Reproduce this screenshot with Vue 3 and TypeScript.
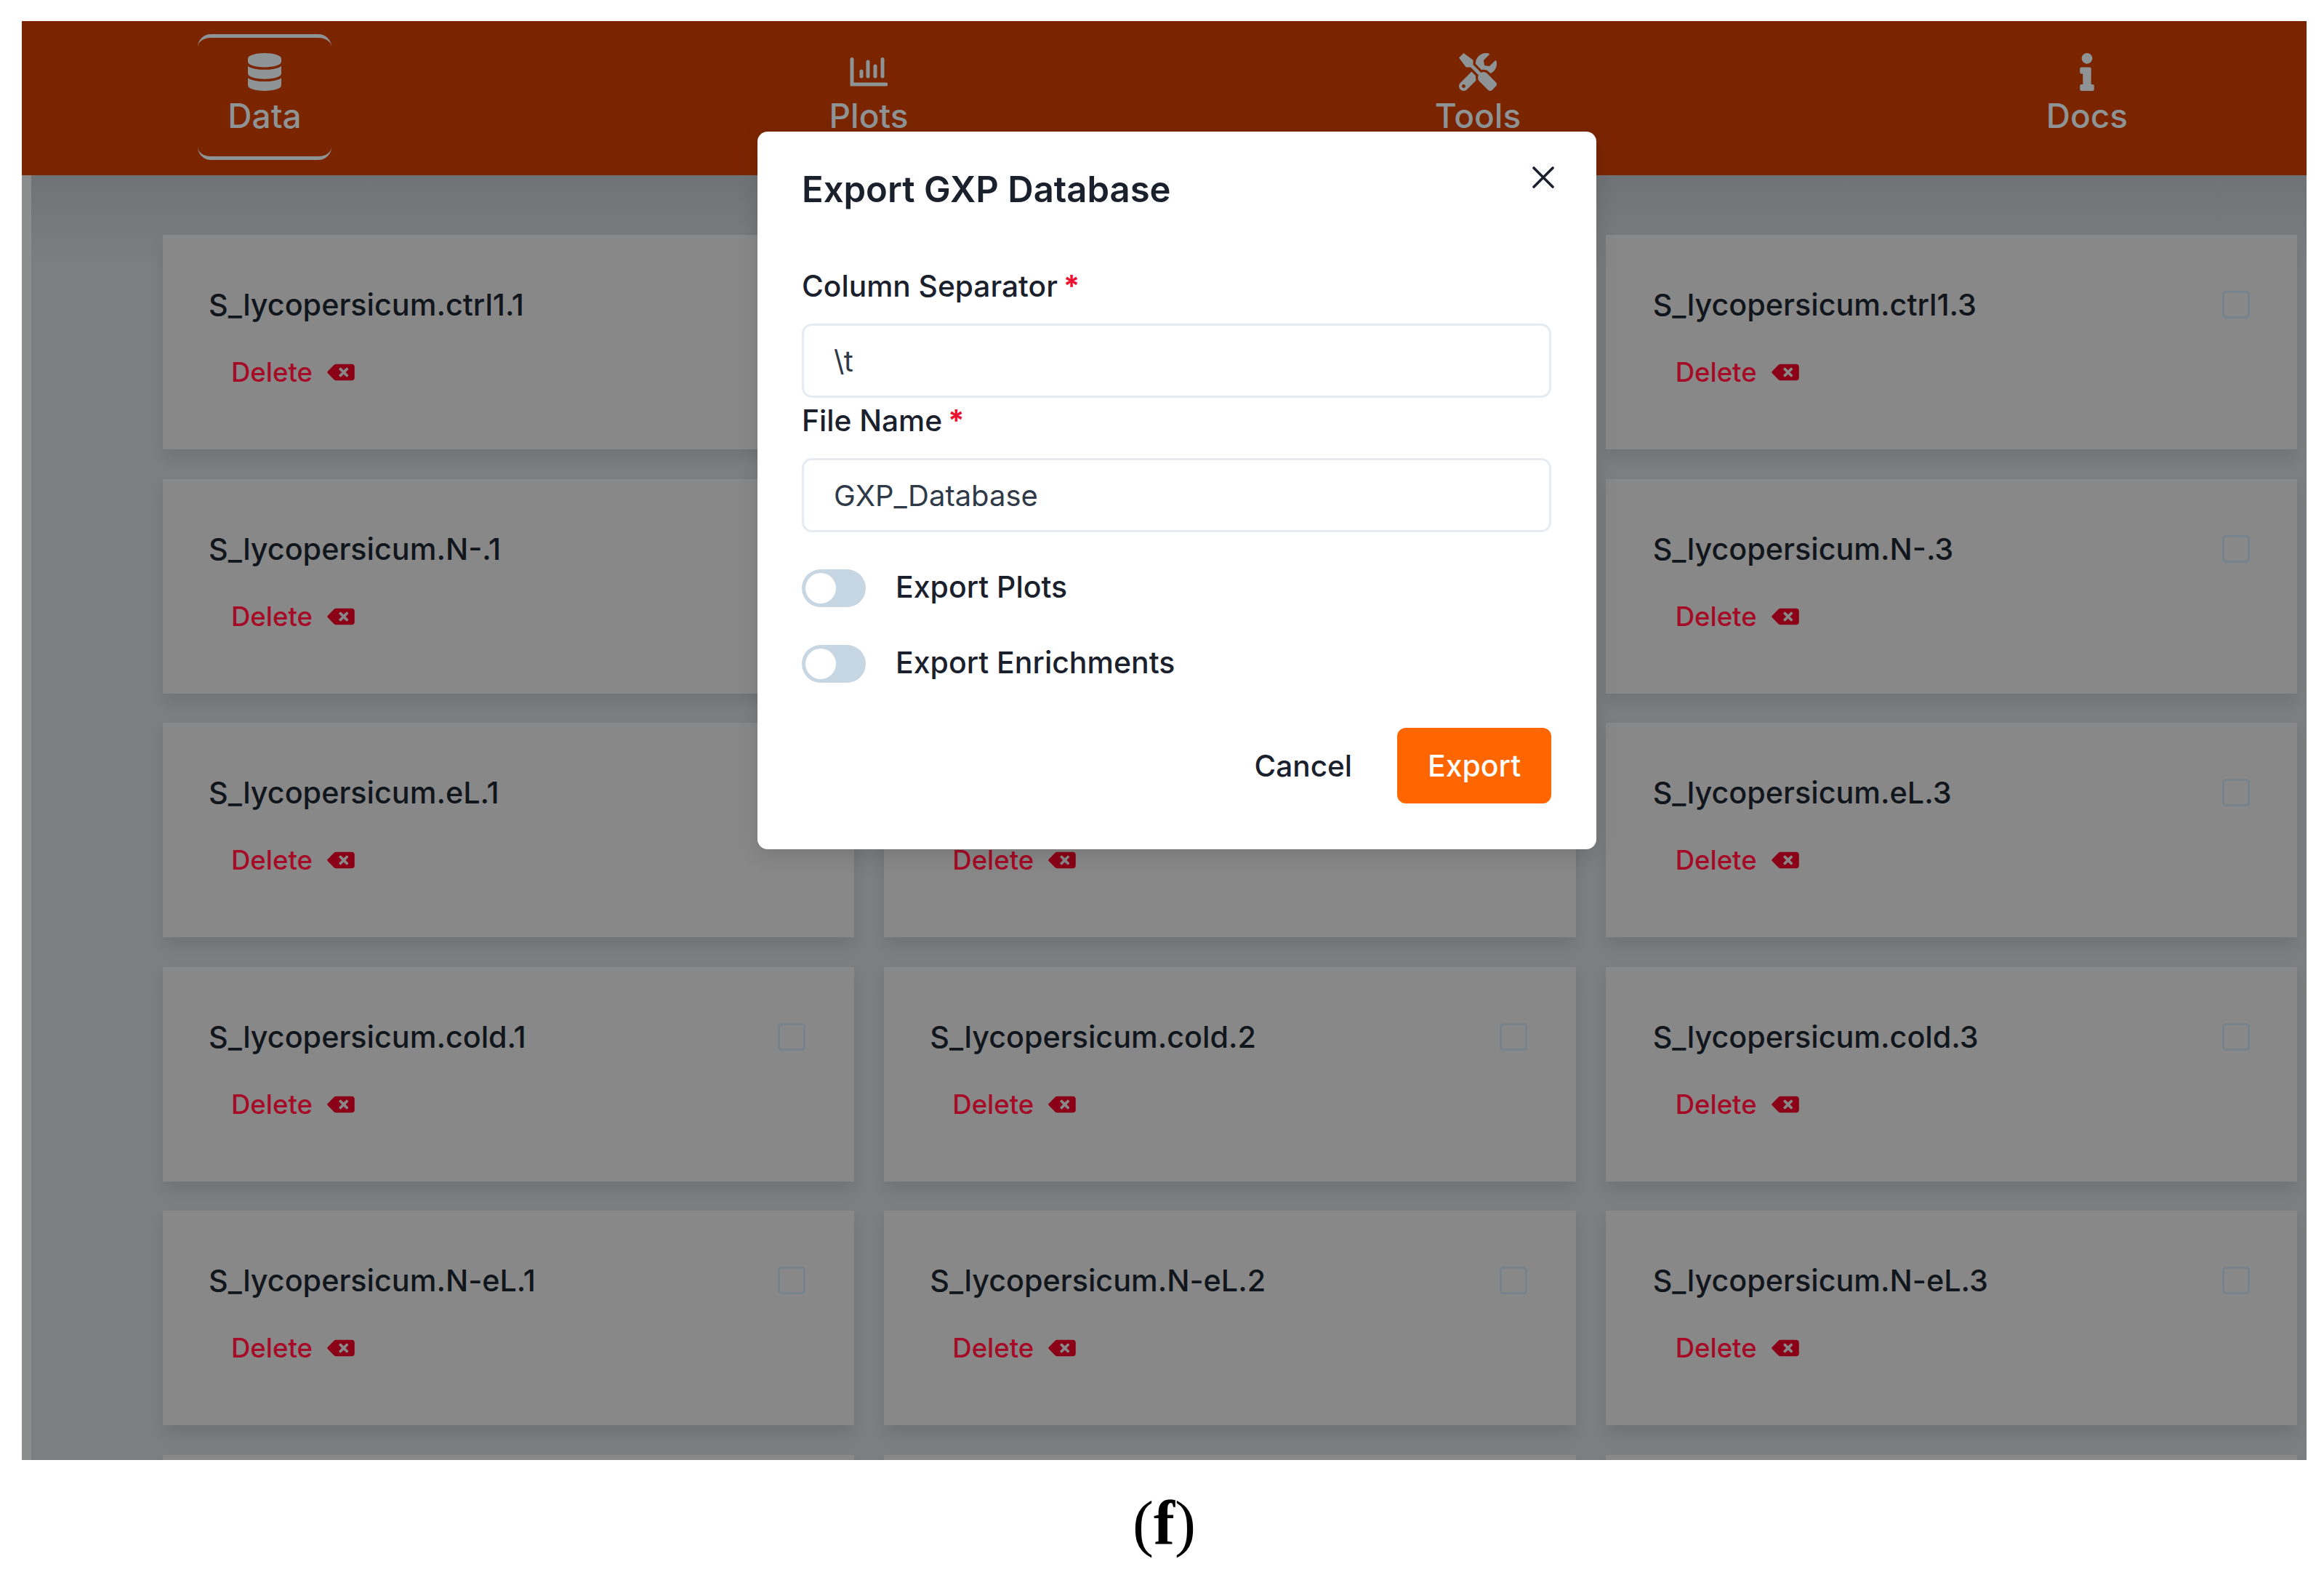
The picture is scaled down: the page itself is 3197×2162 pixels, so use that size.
<script setup lang="ts">
const navItems = [
  { key: "data", label: "Data", active: true },
  { key: "plots", label: "Plots", active: false },
  { key: "tools", label: "Tools", active: false },
  { key: "docs", label: "Docs", active: false },
];

const samples = ["ctrl1", "N-", "eL", "cold", "N-eL"];
const cards: string[] = [];
for (const s of samples) {
  for (const n of [1, 2, 3]) cards.push(`S_lycopersicum.${s}.${n}`);
}
// the sixth row is only just cut off at the bottom of the window
cards.push("", "", "");

const switches = ["Export Plots", "Export Enrichments"];
</script>

<template>
  <div class="page">
    <div class="shot">
      <header class="nav">
        <div v-for="item in navItems" :key="item.key" class="nav-item" :class="{ active: item.active }">
          <div class="nav-icon">
            <svg v-if="item.key === 'data'" width="46" height="52" viewBox="0 0 448 512" fill="currentColor" preserveAspectRatio="none">
              <path d="M448 73.143v45.714C448 159.143 347.667 192 224 192S0 159.143 0 118.857V73.143C0 32.857 100.333 0 224 0s224 32.857 224 73.143zM448 176v102.857C448 319.143 347.667 352 224 352S0 319.143 0 278.857V176c48.125 33.143 136.208 48.572 224 48.572S399.874 209.143 448 176zm0 160v102.857C448 479.143 347.667 512 224 512S0 479.143 0 438.857V336c48.125 33.143 136.208 48.572 224 48.572S399.874 369.143 448 336z"/>
            </svg>
            <svg v-else-if="item.key === 'plots'" width="52" height="40" viewBox="0 0 52 40" fill="none" stroke="currentColor" stroke-width="5" stroke-linecap="round">
              <path d="M3 2.5V37H50"/>
              <path d="M16 19v7M25 6v20M35 12v14M45 2.5V26"/>
            </svg>
            <svg v-else-if="item.key === 'tools'" width="52" height="52" viewBox="0 0 512 512" fill="currentColor">
              <path d="M501.1 395.7L384 278.6c-23.1-23.1-57.6-27.6-85.4-13.9L192 158.1V96L64 0 0 64l96 128h62.1l106.6 106.6c-13.6 27.8-9.2 62.3 13.9 85.4l117.1 117.1c14.6 14.6 38.2 14.6 52.7 0l52.7-52.7c14.5-14.6 14.5-38.2 0-52.7zM331.7 225c28.3 0 54.9 11 74.9 31l19.4 19.4c15.8-6.9 30.8-16.5 43.8-29.5 37.1-37.1 49.7-89.3 37.9-136.7-2.2-9-13.5-12.1-20.1-5.5l-74.4 74.4-67.9-11.3L334 98.9l74.4-74.4c6.6-6.6 3.4-17.9-5.7-20.2-47.4-11.7-99.6.9-136.6 37.9-28.5 28.5-41.9 66.1-41.2 103.6l82.1 82.1c8.1-1.9 16.5-2.9 24.7-2.9zm-103.9 82l-56.7-56.7L18.7 402.8c-25 25-25 65.5 0 90.5s65.5 25 90.5 0l123.6-123.6c-7.6-19.9-9.9-41.6-5-62.7zM64 472c-13.2 0-24-10.8-24-24 0-13.3 10.7-24 24-24s24 10.7 24 24c0 13.2-10.7 24-24 24z"/>
            </svg>
            <svg v-else width="20" height="52" viewBox="0 0 192 512" fill="currentColor">
              <path d="M20 424.229h20V279.771H20c-11.046 0-20-8.954-20-20V212c0-11.046 8.954-20 20-20h112c11.046 0 20 8.954 20 20v212.229h20c11.046 0 20 8.954 20 20V492c0 11.046-8.954 20-20 20H20c-11.046 0-20-8.954-20-20v-47.771c0-11.046 8.954-20 20-20zM96 0C56.235 0 24 32.235 24 72s32.235 72 72 72 72-32.235 72-72S135.764 0 96 0z"/>
            </svg>
          </div>
          <div class="nav-label">{{ item.label }}</div>
        </div>
      </header>

      <div class="body">
        <div class="strip"></div>
        <main class="grid">
          <section v-for="(name, i) in cards" :key="i" class="card">
            <template v-if="name">
              <div class="card-top">
                <span class="card-name">{{ name }}</span>
                <span class="check"></span>
              </div>
              <div class="delete">
                <span>Delete</span>
                <svg width="38" height="30" viewBox="0 0 640 512" fill="currentColor">
                  <path d="M576 64H205.26A63.97 63.97 0 0 0 160 82.75L9.37 233.37c-12.5 12.5-12.5 32.76 0 45.25L160 429.25c12 12 28.28 18.75 45.25 18.75H576c35.35 0 64-28.65 64-64V128c0-35.35-28.65-64-64-64zm-84.69 254.06c6.25 6.25 6.25 16.38 0 22.63l-22.62 22.62c-6.25 6.25-16.38 6.25-22.63 0L384 301.25l-62.06 62.06c-6.25 6.25-16.38 6.25-22.63 0l-22.62-22.62c-6.25-6.25-6.25-16.38 0-22.63L338.75 256l-62.06-62.06c-6.25-6.25-6.25-16.38 0-22.63l22.62-22.62c6.25-6.25 16.38-6.25 22.63 0L384 210.75l62.06-62.06c6.25-6.25 16.38-6.25 22.63 0l22.62 22.62c6.25 6.25 6.25 16.38 0 22.63L429.25 256l62.06 62.06z"/>
                </svg>
              </div>
            </template>
          </section>
        </main>
      </div>

      <div class="modal">
        <h2 class="modal-title">Export GXP Database</h2>
        <svg class="close" width="30" height="30" viewBox="0 0 30 30" fill="none" stroke="currentColor" stroke-width="3.6" stroke-linecap="round">
          <path d="M2 2l26 26M28 2L2 28"/>
        </svg>

        <label class="field-label first">Column Separator <i>*</i></label>
        <div class="input">\t</div>
        <label class="field-label">File Name <i>*</i></label>
        <div class="input">GXP_Database</div>

        <div class="switches">
          <div v-for="s in switches" :key="s" class="switch-row">
            <span class="switch"><span class="knob"></span></span>
            <span class="switch-label">{{ s }}</span>
          </div>
        </div>

        <div class="actions">
          <span class="cancel">Cancel</span>
          <span class="export">Export</span>
        </div>
      </div>
    </div>

    <div class="caption"><span>(</span><b>f</b><span>)</span></div>
  </div>
</template>

<style scoped>
.page {
  width: 3197px;
  height: 2162px;
  padding: 29px 24px 0 30px;
  box-sizing: border-box;
  background: #fff;
  font-family: Inter, "Noto Sans", sans-serif;
  display: flex;
  flex-direction: column;
}

.shot {
  position: relative;
  height: 1979px;
  flex: none;
  overflow: hidden;
  background: linear-gradient(#6f7375 212px, #7b7f81 340px);
}

.nav {
  height: 212px;
  box-sizing: border-box;
  padding: 18px 0 0 242px;
  display: grid;
  grid-template-columns: 831px 838px 838px 184px;
  align-items: start;
  background: #7a2500;
}
.nav-item {
  width: 184px;
  height: 173px;
  box-sizing: border-box;
  padding-top: 21px;
  display: flex;
  flex-direction: column;
  align-items: center;
  color: #8e9496;
  border-radius: 18px;
  border-top: 5px solid transparent;
  border-bottom: 5px solid transparent;
}
.nav-item.active {
  border-top-color: #8e9496;
  border-bottom-color: #8e9496;
}
.nav-icon {
  height: 52px;
  display: flex;
  align-items: center;
  justify-content: center;
}
.nav-label {
  margin-top: 8px;
  font-size: 46px;
  line-height: 53px;
  font-weight: 500;
}

.body {
  display: flex;
}
.strip {
  width: 13px;
  flex: none;
  align-self: stretch;
  background: #8a8c8d;
}
.grid {
  flex: 1;
  padding: 82px 13px 0 181px;
  display: grid;
  grid-template-columns: repeat(3, 1fr);
  grid-auto-rows: 295px;
  column-gap: 41px;
  row-gap: 40.5px;
}
.card {
  background: #888888;
  box-shadow: 0 12px 18px rgba(0, 0, 0, 0.09);
  padding: 71px 67px 0 63px;
  box-sizing: border-box;
}
.card:nth-child(3n) {
  padding: 71px 65px 0 65px;
}
.card-top {
  display: flex;
  align-items: center;
  justify-content: space-between;
  height: 50px;
}
.card-name {
  font-size: 41.3px;
  font-weight: 500;
  color: #11151c;
  white-space: nowrap;
}
.check {
  width: 38px;
  height: 38px;
  box-sizing: border-box;
  border: 3px solid #76828c;
  border-radius: 5px;
}
.delete {
  margin: 46px 0 0 31px;
  display: flex;
  align-items: center;
  gap: 20px;
  font-size: 36.5px;
  font-weight: 500;
  line-height: 44px;
  color: #a50a26;
}
.delete svg {
  color: #8b0016;
}

.modal {
  position: absolute;
  left: 1012px;
  top: 152px;
  width: 1154px;
  height: 987px;
  box-sizing: border-box;
  padding: 48px 62px 0 61px;
  background: #fff;
  border-radius: 14px;
  box-shadow: 0 10px 30px rgba(0, 0, 0, 0.12);
  color: #1a202c;
}
.modal-title {
  margin: 0;
  font-size: 49px;
  line-height: 64px;
  font-weight: 600;
}
.close {
  position: absolute;
  top: 48px;
  right: 58px;
  color: #1a202c;
}
.field-label {
  display: block;
  height: 48px;
  line-height: 48px;
  font-size: 40.7px;
  font-weight: 500;
  margin-top: 8px;
  margin-bottom: 27px;
}
.field-label.first {
  margin-top: 77px;
  margin-bottom: 27px;
}
.field-label i {
  font-style: normal;
  font-weight: 700;
  color: #ee1030;
  margin-left: -3px;
}
.input {
  height: 102px;
  box-sizing: border-box;
  padding-left: 41px;
  border: 3px solid #e6ebf2;
  border-radius: 14px;
  display: flex;
  align-items: center;
  font-size: 40px;
  color: #2f3a48;
}
.switches {
  margin-top: 51px;
  display: flex;
  flex-direction: column;
  gap: 52px;
}
.switch-row {
  display: flex;
  align-items: center;
  gap: 41px;
  height: 52px;
}
.switch {
  width: 88px;
  height: 52px;
  box-sizing: border-box;
  padding: 5px;
  border-radius: 26px;
  background: #c6d6e3;
  display: flex;
  align-items: center;
}
.knob {
  width: 42px;
  height: 42px;
  border-radius: 50%;
  background: #fff;
}
.switch-label {
  font-size: 41px;
  font-weight: 500;
  margin-top: -4px;
}
.actions {
  margin-top: 62px;
  display: flex;
  justify-content: flex-end;
  align-items: center;
  gap: 62px;
}
.cancel {
  font-size: 40.5px;
  font-weight: 500;
}
.export {
  width: 212px;
  height: 104px;
  display: flex;
  align-items: center;
  justify-content: center;
  border-radius: 12px;
  background: #ff6600;
  color: #fff;
  font-size: 41px;
  font-weight: 500;
}

.caption {
  flex: 1;
  display: flex;
  align-items: center;
  justify-content: center;
  padding-top: 18px;
  font-family: "Liberation Serif", serif;
  font-size: 87px;
  color: #000;
}
</style>
